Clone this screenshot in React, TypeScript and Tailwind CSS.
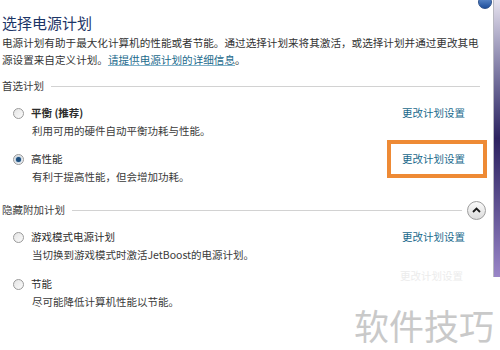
const font = { fontFamily: '"Noto Sans CJK SC", "Noto Sans", sans-serif' }

function Radio({ checked }: { checked?: boolean }) {
  return (
    <span className="flex h-[11px] w-[11px] shrink-0 items-center justify-center rounded-full border border-[#9a9a9a] bg-gradient-to-br from-[#e4e4e4] to-[#fbfbfb]">
      {checked && <span className="h-[5px] w-[5px] rounded-full bg-[#1f4f7d] shadow-[0_0_2px_#3b7bb5]" />}
    </span>
  )
}

function Section({ title, lineEnd, children }: { title: string; lineEnd: string; children?: React.ReactNode }) {
  return (
    <div className="flex h-[20px] items-center">
      <span className="text-[10.5px] leading-none text-[#3c3c3c]">{title}</span>
      <div className={`ml-[7px] h-px flex-1 bg-[#d2d2d2] ${lineEnd}`} />
      {children}
    </div>
  )
}

function Plan({
  name,
  desc,
  checked,
  bold,
  link = true,
  boxed,
}: {
  name: string
  desc: string
  checked?: boolean
  bold?: boolean
  link?: boolean
  boxed?: boolean
}) {
  return (
    <div className="relative">
      <div className="flex h-[18px] items-center">
        <div className="ml-[11px] flex items-center">
          <Radio checked={checked} />
        </div>
        <span className={`ml-[7px] text-[10.5px] text-[#2b2b2b] ${bold ? 'font-bold' : ''}`}>{name}</span>
        <div className="flex-1" />
        {link && <span className="mr-[28px] text-[10.5px] text-[#1b6a8c]">更改计划设置</span>}
      </div>
      <div className="ml-[30px] flex h-[18px] items-center text-[10.5px] text-[#3a3a3a]">{desc}</div>
      {boxed && (
        <div className="absolute left-[385px] top-[-10px] h-[38px] w-[100px] border-[4px] border-[#ee8a35]" />
      )}
    </div>
  )
}

export default function App() {
  return (
    <div className="relative flex h-[350px] w-[500px] overflow-hidden bg-white" style={font}>
      <div className="flex-1 pl-[2px]">
        <div className="mt-[14px] flex h-[18px] items-center text-[15px] text-[#1d3566]">选择电源计划</div>
        <div className="mt-[2px] text-[10.6px] leading-[17px] text-[#333] whitespace-nowrap">
          <div>电源计划有助于最大化计算机的性能或者节能。通过选择计划来将其激活，或选择计划并通过更改其电</div>
          <div>
            源设置来自定义计划。<span className="text-[#1b6a8c] underline decoration-[#7fb0c8]">请提供电源计划的详细信息</span>。
          </div>
        </div>
        <div className="mt-[8px]">
          <Section title="首选计划" lineEnd="mr-[13px]" />
        </div>
        <div className="mt-[8px]">
          <Plan name="平衡 (推荐)" desc="利用可用的硬件自动平衡功耗与性能。" bold />
        </div>
        <div className="mt-[10px]">
          <Plan name="高性能" desc="有利于提高性能，但会增加功耗。" checked boxed />
        </div>
        <div className="mt-[14px]">
          <Section title="隐藏附加计划" lineEnd="mr-[5px]">
            <span className="mr-[7px] flex h-[19px] w-[19px] items-center justify-center rounded-full border border-[#9d9d9d] bg-gradient-to-b from-[#fafafa] to-[#dcdcdc]">
              <svg width="9" height="6" viewBox="0 0 9 6">
                <path d="M1 5 L4.5 1.5 L8 5" fill="none" stroke="#1a1a1a" strokeWidth="1.8" />
              </svg>
            </span>
          </Section>
        </div>
        <div className="mt-[8px]">
          <Plan name="游戏模式电源计划" desc="当切换到游戏模式时激活JetBoost的电源计划。" />
        </div>
        <div className="mt-[11px]">
          <Plan name="节能" desc="尽可能降低计算机性能以节能。" link={false} />
        </div>
      </div>
      <div className="h-[277px] w-[7px] border-l border-[#b8b8c0] bg-gradient-to-b from-[#e6e2ee] via-[#2d2260] to-[#9a86c8]" />
      <div className="absolute left-[478px] top-[-5px] h-[14px] w-[14px] rounded-full border border-[#2b4f8a] bg-gradient-to-b from-[#6f9ad6] to-[#1e4f9c]" />
      <div className="absolute left-[400px] top-[268px] text-[10.5px] text-[#ececec]">更改计划设置</div>
      <div className="absolute left-[354px] top-[305px] text-[35px] leading-[40px] text-[#c9c9c9]">软件技巧</div>
    </div>
  )
}
